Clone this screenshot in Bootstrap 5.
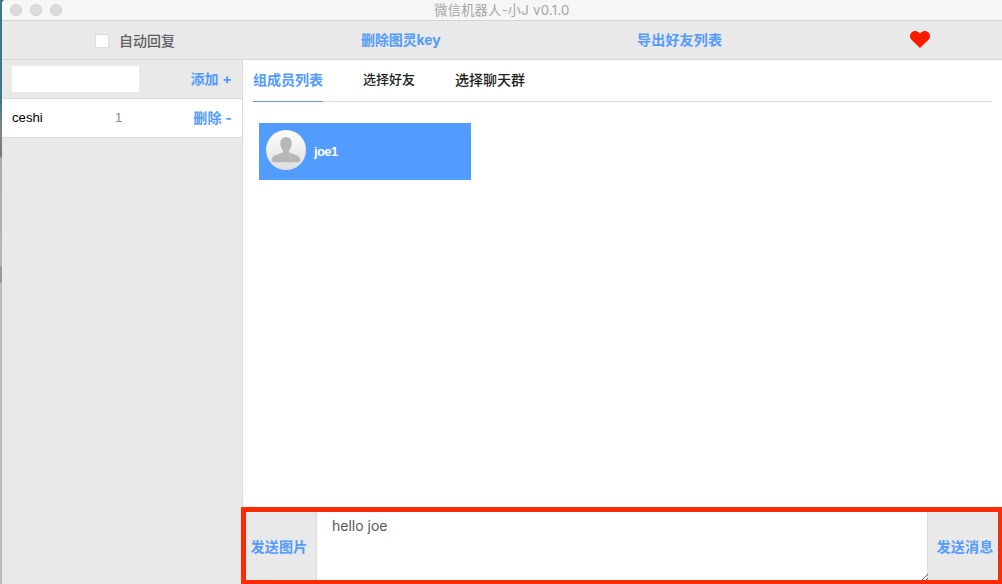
<!DOCTYPE html>
<html lang="zh-CN">
<head>
<meta charset="utf-8">
<title>微信机器人-小J v0.1.0</title>
<link href="https://cdn.jsdelivr.net/npm/bootstrap@5.3.0/dist/css/bootstrap.min.css" rel="stylesheet">
<style>
body{height:584px;overflow:hidden;font-family:"Liberation Sans","Noto Sans CJK SC",sans-serif;font-size:14px;line-height:20px;color:#222;
background:linear-gradient(#3f7488 0,#41758a 100px,#7d8a86 130px,#777 156px,#aaa 158px,#b6b6b6 265px,#999 267px,#999 282px,#bbb 284px)}
.app-window{height:584px;margin-left:2px;background:#fff;border-top-left-radius:4px;overflow:hidden}
.title-bar{height:21px;background:#f6f6f6;border-bottom:1px solid #d2d4d3;font:13.2px/20px "Inter","Noto Sans CJK SC",sans-serif;letter-spacing:.25px;color:#a5a5a5}
.lights{left:8px;top:4px;gap:8px}
.lights span{width:12px;height:12px;border-radius:50%;background:#dcdcdc;border:1px solid #cfcfcf}
.tool-bar{height:39px;background:#e9e9e9;border-bottom:1px solid #d6d8d8;display:grid;grid-template-columns:267px 276px 273px 1fr;padding-left:92px}
.act{color:#529bff;font-family:"Inter","Noto Sans CJK SC",sans-serif;font-weight:700;letter-spacing:.2px;text-decoration:none;white-space:nowrap}
.key{letter-spacing:-.1px}
.check{width:14px;height:14px;background:#fff;border:1px solid #ddd;margin:0 10px 0 1px}
.auto{color:#5d5f62;font-weight:500;padding-top:1px}
.side{width:241px;background:#e9e9e9;border-right:1px solid #d9dbdc}
.side-row{height:39px;border-bottom:1px solid #d7d9da;padding:0 10px}
.group-input{width:127px;height:26px;border:0;background:#fff}
.group-name{font-size:13.2px;color:#000;width:103px}
.group-count{font-size:13px;color:#8b8b8b}
.tab-line{height:42px;margin:0 10px;border-bottom:1px solid #d9dee0;gap:40px}
.tab-line a{height:42px;line-height:40px;color:#222;font-weight:500;text-decoration:none;white-space:nowrap}
.tab-line a.friends{font-size:13px}
.tab-line a.on{color:#529bff;border-bottom:1px solid #5a9ccb;font-weight:700}
.member{width:212px;height:57px;margin:21px 0 0 16px;padding:0 7px;background:#529bff;color:#fff;font-size:13px;font-weight:700;letter-spacing:-.6px}
.composer{height:77px;border:5px solid #fb2b06;margin-left:-2px;border-right-width:4px;border-bottom-width:4px}
.send{width:70px;padding-top:2px;background:#e9e9e9}
.send-image{padding-right:4px}
.send-text{padding-left:4px}
.message{resize:none;border:solid #d9dbdc;border-width:0 1px;padding:4px 15px;font:14px/20px "Inter",sans-serif;color:#54575b;outline:0;display:block}
</style>
</head>
<body>
<div class="app-window d-flex flex-column">
  <header class="title-bar position-relative text-center flex-shrink-0">
    <div class="lights position-absolute d-flex"><span></span><span></span><span></span></div>
    微信机器人-小J v0.1.0
  </header>
  <nav class="tool-bar align-items-center flex-shrink-0">
    <label class="d-flex align-items-center auto"><span class="check"></span>自动回复</label>
    <a class="act key" href="#">删除图灵key</a>
    <a class="act" href="#">导出好友列表</a>
    <svg width="20" height="17" viewBox="0 0 20 17" style="margin-top:-1px"><path fill="#fb1c00" d="M10 17 1.500 8.800C.5 7.800 0 6.500 0 5.200 0 2.300 2.200 0 5.100 0 7 0 8.900 1 10 2.700 11.100 1 13 0 14.900 0 17.800 0 20 2.300 20 5.200c0 1.300-.5 2.600-1.500 3.600z"/></svg>
  </nav>
  <div class="d-flex flex-grow-1">
    <aside class="side flex-shrink-0">
      <div class="side-row d-flex align-items-center justify-content-between">
        <input class="group-input" type="text" aria-label="分组"><a class="act" href="#">添加 +</a>
      </div>
      <div class="side-row bg-white d-flex align-items-center">
        <span class="group-name">ceshi</span><span class="group-count">1</span><a class="act ms-auto" href="#">删除 -</a>
      </div>
    </aside>
    <main class="flex-grow-1 d-flex flex-column">
      <nav class="tab-line d-flex"><a class="on" href="#">组成员列表</a><a class="friends" href="#">选择好友</a><a href="#">选择聊天群</a></nav>
      <div class="flex-grow-1">
        <div class="member d-flex align-items-center">
          <svg class="me-2" width="40" height="40" viewBox="0 0 40 40" style="margin-top:-3px"><defs><linearGradient id="face" x2="0" y2="1"><stop stop-color="#fff"/><stop offset="1" stop-color="#dedede"/></linearGradient></defs><circle cx="20" cy="20" r="20" fill="url(#face)"/><path fill="#b7b7b7" d="M20 7c4 0 6 3 5.700 7-.2 3-1.300 5-2.700 6.500v2c3.500 1.500 11 2.700 11.400 7 .1 2-1 2.700-2.400 2.700H8c-1.700 0-2.600-.8-2.400-2.700.4-4.300 8-5.500 11.400-7v-2c-1.400-1.500-2.500-3.500-2.700-6.500C14 10 16 7 20 7z"/></svg>joe1
        </div>
      </div>
      <section class="composer d-flex">
        <a class="act send send-image d-flex align-items-center justify-content-center" href="#">发送图片</a>
        <div class="flex-grow-1 position-relative d-flex">
          <textarea class="message w-100 h-100" aria-label="消息">hello joe</textarea>
          <svg class="position-absolute bottom-0 end-0" width="6" height="6" viewBox="0 0 6 6"><path d="M0 6 6 0M4 6l2-2" stroke="#555" fill="none"/></svg>
        </div>
        <a class="act send send-text d-flex align-items-center justify-content-center" href="#">发送消息</a>
      </section>
    </main>
  </div>
</div>
<script src="https://cdn.jsdelivr.net/npm/bootstrap@5.3.0/dist/js/bootstrap.bundle.min.js"></script>
</body>
</html>
